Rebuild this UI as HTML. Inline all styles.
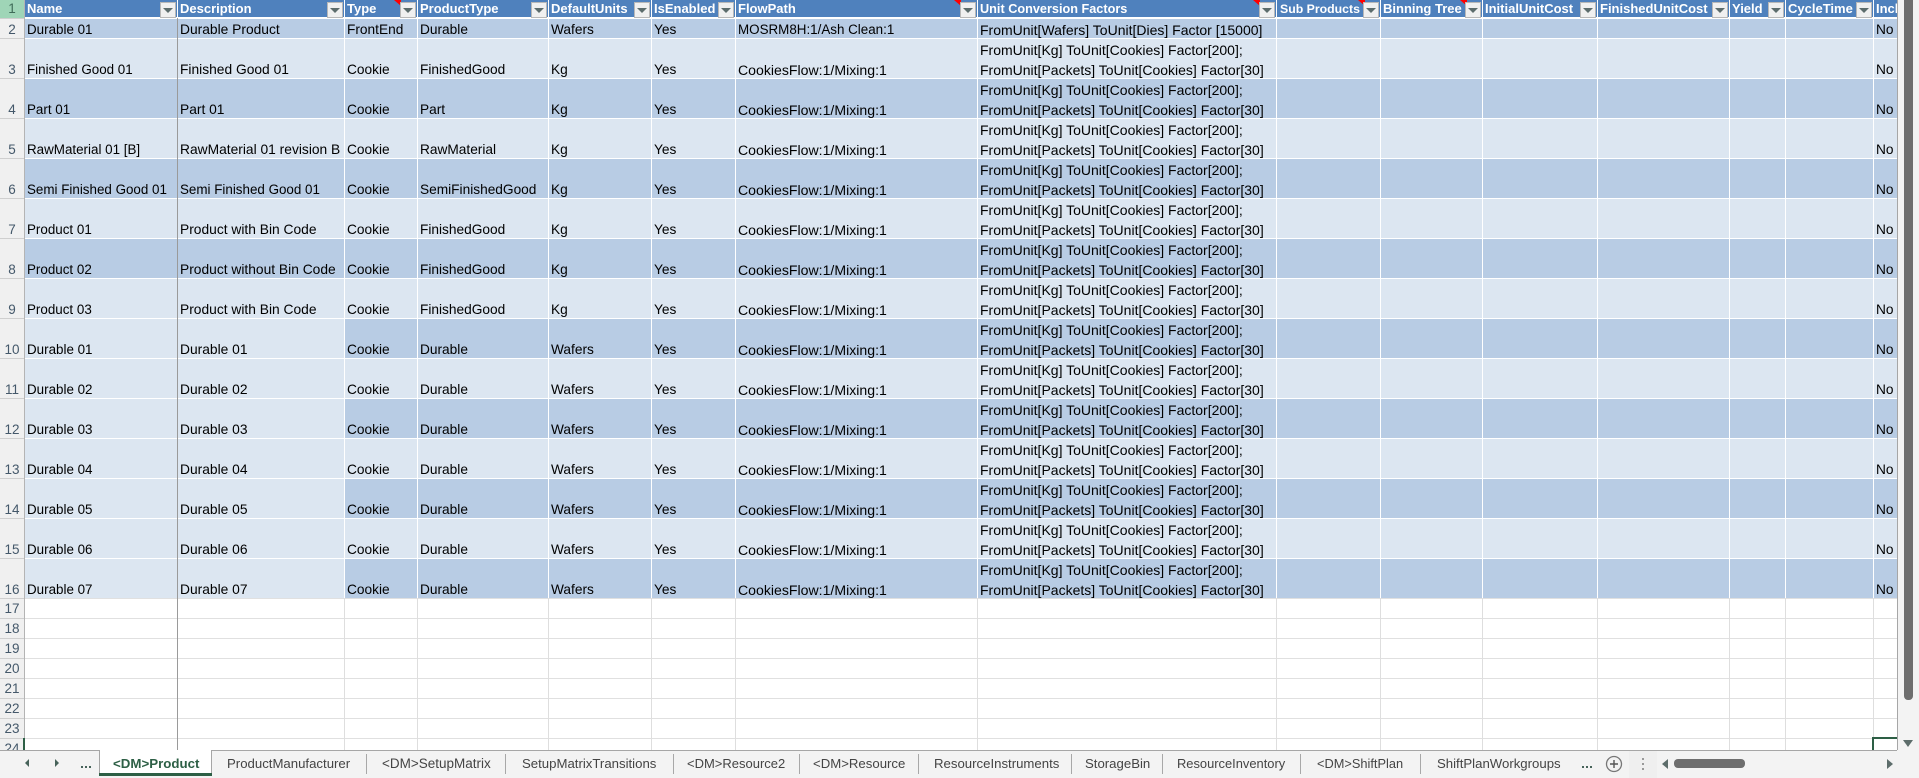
<!DOCTYPE html>
<html><head><meta charset="utf-8"><title>Sheet</title>
<style>
html,body{margin:0;padding:0;background:#fff}
#p{position:relative;width:1919px;height:778px;overflow:hidden;font-family:"Liberation Sans",sans-serif;background:#fff}
#s{position:absolute;left:0;top:0;width:1897px;height:750px;overflow:hidden}
#s div,#t div,#p>div.a{position:absolute}
.d{left:25px;width:1872px;background:#b8cce4}
.l{left:25px;width:1872px;background:#dce6f1}
.m{left:25px;width:319px;background:#dce6f1}
.g{left:0;width:1897px;height:1px;background:#e0e0e0}
.v{top:0;width:1px;height:750px;background:linear-gradient(#fff 598px,#dedede 598px)}
.h{left:0;width:24px;text-align:center;font-size:13.5px;line-height:20px;color:#44586a;height:20px}
.n{left:0;width:24px;height:1px;background:#cfcfcf}
.r{left:0;height:20px;width:1897px}
.r i{position:absolute;top:1px;font-style:normal;font-size:13.7px;line-height:20px;color:#000;white-space:nowrap}
.r i.u{top:-19px}
.r i.c1{font-size:13.4px}.r i.c2{font-size:13.8px}.r i.c7{font-size:14.1px}.r i.c8{font-size:14px}
.r.q i{font-weight:bold;color:#fff;font-size:13px;top:0}
.c1{left:27px}.c2{left:180px}.c3{left:347px}.c4{left:420px}.c5{left:551px}.c6{left:654px}.c7{left:738px}.c8{left:980px}.c9{left:1876px}
.f{top:2px;width:14px;height:14px;background:#f0f0f0;border:1px solid #b8b8b8;box-sizing:content-box}
.f::after{content:"";position:absolute;left:2px;top:5px;border-left:5px solid transparent;border-right:5px solid transparent;border-top:5px solid #5c6c6c}
.tr{top:0;width:7px;height:6px;background:#f00;clip-path:polygon(0 0,100% 0,100% 100%)}
#t{position:absolute;left:0;top:750px;width:1919px;height:28px;background:#f3f3f3}
.x{top:1px;height:24px;line-height:26px;font-size:13.2px;color:#444;white-space:nowrap}
.w{top:4px;width:1px;height:20px;background:#a8a8a8}
</style></head><body>
<div id="p">
<div id="s">
<div style="left:25px;top:0;width:1872px;height:17px;background:#4f81bd"></div>
<div style="left:25px;top:17px;width:1872px;height:1px;background:#fff"></div>
<div class="d" style="top:19px;height:19px"></div>
<div class="l" style="top:39px;height:39px"></div>
<div class="d" style="top:79px;height:39px"></div>
<div class="l" style="top:119px;height:39px"></div>
<div class="d" style="top:159px;height:39px"></div>
<div class="l" style="top:199px;height:39px"></div>
<div class="d" style="top:239px;height:39px"></div>
<div class="l" style="top:279px;height:39px"></div>
<div class="d" style="top:319px;height:39px"></div><div class="m" style="top:319px;height:39px"></div>
<div class="l" style="top:359px;height:39px"></div>
<div class="d" style="top:399px;height:39px"></div><div class="m" style="top:399px;height:39px"></div>
<div class="l" style="top:439px;height:39px"></div>
<div class="d" style="top:479px;height:39px"></div><div class="m" style="top:479px;height:39px"></div>
<div class="l" style="top:519px;height:39px"></div>
<div class="d" style="top:559px;height:39px"></div><div class="m" style="top:559px;height:39px"></div>
<div class="g" style="top:598px"></div><div class="g" style="top:618px"></div><div class="g" style="top:638px"></div><div class="g" style="top:658px"></div><div class="g" style="top:678px"></div><div class="g" style="top:698px"></div><div class="g" style="top:718px"></div><div class="g" style="top:738px"></div>
<div class="v" style="left:344px"></div><div class="v" style="left:417px"></div><div class="v" style="left:548px"></div><div class="v" style="left:651px"></div><div class="v" style="left:735px"></div><div class="v" style="left:977px"></div><div class="v" style="left:1276px"></div><div class="v" style="left:1380px"></div><div class="v" style="left:1482px"></div><div class="v" style="left:1597px"></div><div class="v" style="left:1729px"></div><div class="v" style="left:1785px"></div><div class="v" style="left:1873px"></div>
<div style="left:177px;top:0;width:1px;height:17px;background:#fff"></div>
<div style="left:177px;top:18px;width:1px;height:732px;background:#9a9a9a"></div>

<div style="left:0;top:0;width:24px;height:750px;background:#f0f0f0"></div>
<div style="left:24px;top:0;width:1px;height:750px;background:#b4b4b4"></div>
<div style="left:0;top:0;width:24px;height:18px;background:#9fd5b7"></div>
<div class="n" style="top:18px"></div><div class="n" style="top:38px"></div><div class="n" style="top:78px"></div><div class="n" style="top:118px"></div><div class="n" style="top:158px"></div><div class="n" style="top:198px"></div><div class="n" style="top:238px"></div><div class="n" style="top:278px"></div><div class="n" style="top:318px"></div><div class="n" style="top:358px"></div><div class="n" style="top:398px"></div><div class="n" style="top:438px"></div><div class="n" style="top:478px"></div><div class="n" style="top:518px"></div><div class="n" style="top:558px"></div><div class="n" style="top:598px"></div><div class="n" style="top:618px"></div><div class="n" style="top:638px"></div><div class="n" style="top:658px"></div><div class="n" style="top:678px"></div><div class="n" style="top:698px"></div><div class="n" style="top:718px"></div><div class="n" style="top:738px"></div>
<div class="h" style="top:-1px;color:#3f6b58">1</div><div class="h" style="top:20px">2</div><div class="h" style="top:60px">3</div><div class="h" style="top:100px">4</div><div class="h" style="top:140px">5</div><div class="h" style="top:180px">6</div><div class="h" style="top:220px">7</div><div class="h" style="top:260px">8</div><div class="h" style="top:300px">9</div><div class="h" style="top:340px">10</div><div class="h" style="top:380px">11</div><div class="h" style="top:420px">12</div><div class="h" style="top:460px">13</div><div class="h" style="top:500px">14</div><div class="h" style="top:540px">15</div><div class="h" style="top:580px">16</div><div class="h" style="top:599px">17</div><div class="h" style="top:619px">18</div><div class="h" style="top:639px">19</div><div class="h" style="top:659px">20</div><div class="h" style="top:679px">21</div><div class="h" style="top:699px">22</div><div class="h" style="top:719px">23</div><div class="h" style="top:739px">24</div>
<div style="left:23px;top:738px;width:2px;height:12px;background:#2d5f45"></div>
<div style="left:1872px;top:737px;width:25px;height:2px;background:#2d5f45"></div>
<div style="left:1872px;top:737px;width:2px;height:13px;background:#2d5f45"></div>

<div class="r q" style="top:-1px"><i class="c1">Name</i><i class="c2">Description</i><i class="c3">Type</i><i class="c4">ProductType</i><i class="c5">DefaultUnits</i><i class="c6">IsEnabled</i><i class="c7">FlowPath</i><i class="c8" style="font-size:12.7px">Unit Conversion Factors</i><i style="left:1280px;font-size:12.3px">Sub Products</i><i style="left:1383px">Binning Tree</i><i style="left:1485px">InitialUnitCost</i><i style="left:1600px">FinishedUnitCost</i><i style="left:1732px">Yield</i><i style="left:1788px">CycleTime</i><i class="c9">Inclu</i></div>

<div class="tr" style="left:394px"></div><div class="tr" style="left:954px"></div><div class="tr" style="left:1253px"></div><div class="tr" style="left:1358px"></div><div class="tr" style="left:1460px"></div>
<div class="f" style="left:160px"></div><div class="f" style="left:327px"></div><div class="f" style="left:400px"></div><div class="f" style="left:531px"></div><div class="f" style="left:634px"></div><div class="f" style="left:718px"></div><div class="f" style="left:960px"></div><div class="f" style="left:1259px"></div><div class="f" style="left:1363px"></div><div class="f" style="left:1465px"></div><div class="f" style="left:1580px"></div><div class="f" style="left:1712px"></div><div class="f" style="left:1768px"></div><div class="f" style="left:1856px"></div>

<div class="r" style="top:19px"><i class="c1">Durable 01</i><i class="c2">Durable Product</i><i class="c3">FrontEnd</i><i class="c4">Durable</i><i class="c5">Wafers</i><i class="c6">Yes</i><i class="c7" style="font-size:13.4px">MOSRM8H:1/Ash Clean:1</i><i class="c8">FromUnit[Wafers] ToUnit[Dies] Factor [15000]</i><i class="c9">No</i></div>
<div class="r" style="top:59px"><i class="c1">Finished Good 01</i><i class="c2">Finished Good 01</i><i class="c3">Cookie</i><i class="c4">FinishedGood</i><i class="c5">Kg</i><i class="c6">Yes</i><i class="c7">CookiesFlow:1/Mixing:1</i><i class="c8 u">FromUnit[Kg] ToUnit[Cookies] Factor[200];</i><i class="c8">FromUnit[Packets] ToUnit[Cookies] Factor[30]</i><i class="c9">No</i></div>
<div class="r" style="top:99px"><i class="c1">Part 01</i><i class="c2">Part 01</i><i class="c3">Cookie</i><i class="c4">Part</i><i class="c5">Kg</i><i class="c6">Yes</i><i class="c7">CookiesFlow:1/Mixing:1</i><i class="c8 u">FromUnit[Kg] ToUnit[Cookies] Factor[200];</i><i class="c8">FromUnit[Packets] ToUnit[Cookies] Factor[30]</i><i class="c9">No</i></div>
<div class="r" style="top:139px"><i class="c1">RawMaterial 01 [B]</i><i class="c2">RawMaterial 01 revision B</i><i class="c3">Cookie</i><i class="c4">RawMaterial</i><i class="c5">Kg</i><i class="c6">Yes</i><i class="c7">CookiesFlow:1/Mixing:1</i><i class="c8 u">FromUnit[Kg] ToUnit[Cookies] Factor[200];</i><i class="c8">FromUnit[Packets] ToUnit[Cookies] Factor[30]</i><i class="c9">No</i></div>
<div class="r" style="top:179px"><i class="c1">Semi Finished Good 01</i><i class="c2" style="font-size:13.4px">Semi Finished Good 01</i><i class="c3">Cookie</i><i class="c4">SemiFinishedGood</i><i class="c5">Kg</i><i class="c6">Yes</i><i class="c7">CookiesFlow:1/Mixing:1</i><i class="c8 u">FromUnit[Kg] ToUnit[Cookies] Factor[200];</i><i class="c8">FromUnit[Packets] ToUnit[Cookies] Factor[30]</i><i class="c9">No</i></div>
<div class="r" style="top:219px"><i class="c1">Product 01</i><i class="c2">Product with Bin Code</i><i class="c3">Cookie</i><i class="c4">FinishedGood</i><i class="c5">Kg</i><i class="c6">Yes</i><i class="c7">CookiesFlow:1/Mixing:1</i><i class="c8 u">FromUnit[Kg] ToUnit[Cookies] Factor[200];</i><i class="c8">FromUnit[Packets] ToUnit[Cookies] Factor[30]</i><i class="c9">No</i></div>
<div class="r" style="top:259px"><i class="c1">Product 02</i><i class="c2">Product without Bin Code</i><i class="c3">Cookie</i><i class="c4">FinishedGood</i><i class="c5">Kg</i><i class="c6">Yes</i><i class="c7">CookiesFlow:1/Mixing:1</i><i class="c8 u">FromUnit[Kg] ToUnit[Cookies] Factor[200];</i><i class="c8">FromUnit[Packets] ToUnit[Cookies] Factor[30]</i><i class="c9">No</i></div>
<div class="r" style="top:299px"><i class="c1">Product 03</i><i class="c2">Product with Bin Code</i><i class="c3">Cookie</i><i class="c4">FinishedGood</i><i class="c5">Kg</i><i class="c6">Yes</i><i class="c7">CookiesFlow:1/Mixing:1</i><i class="c8 u">FromUnit[Kg] ToUnit[Cookies] Factor[200];</i><i class="c8">FromUnit[Packets] ToUnit[Cookies] Factor[30]</i><i class="c9">No</i></div>
<div class="r" style="top:339px"><i class="c1">Durable 01</i><i class="c2">Durable 01</i><i class="c3">Cookie</i><i class="c4">Durable</i><i class="c5">Wafers</i><i class="c6">Yes</i><i class="c7">CookiesFlow:1/Mixing:1</i><i class="c8 u">FromUnit[Kg] ToUnit[Cookies] Factor[200];</i><i class="c8">FromUnit[Packets] ToUnit[Cookies] Factor[30]</i><i class="c9">No</i></div>
<div class="r" style="top:379px"><i class="c1">Durable 02</i><i class="c2">Durable 02</i><i class="c3">Cookie</i><i class="c4">Durable</i><i class="c5">Wafers</i><i class="c6">Yes</i><i class="c7">CookiesFlow:1/Mixing:1</i><i class="c8 u">FromUnit[Kg] ToUnit[Cookies] Factor[200];</i><i class="c8">FromUnit[Packets] ToUnit[Cookies] Factor[30]</i><i class="c9">No</i></div>
<div class="r" style="top:419px"><i class="c1">Durable 03</i><i class="c2">Durable 03</i><i class="c3">Cookie</i><i class="c4">Durable</i><i class="c5">Wafers</i><i class="c6">Yes</i><i class="c7">CookiesFlow:1/Mixing:1</i><i class="c8 u">FromUnit[Kg] ToUnit[Cookies] Factor[200];</i><i class="c8">FromUnit[Packets] ToUnit[Cookies] Factor[30]</i><i class="c9">No</i></div>
<div class="r" style="top:459px"><i class="c1">Durable 04</i><i class="c2">Durable 04</i><i class="c3">Cookie</i><i class="c4">Durable</i><i class="c5">Wafers</i><i class="c6">Yes</i><i class="c7">CookiesFlow:1/Mixing:1</i><i class="c8 u">FromUnit[Kg] ToUnit[Cookies] Factor[200];</i><i class="c8">FromUnit[Packets] ToUnit[Cookies] Factor[30]</i><i class="c9">No</i></div>
<div class="r" style="top:499px"><i class="c1">Durable 05</i><i class="c2">Durable 05</i><i class="c3">Cookie</i><i class="c4">Durable</i><i class="c5">Wafers</i><i class="c6">Yes</i><i class="c7">CookiesFlow:1/Mixing:1</i><i class="c8 u">FromUnit[Kg] ToUnit[Cookies] Factor[200];</i><i class="c8">FromUnit[Packets] ToUnit[Cookies] Factor[30]</i><i class="c9">No</i></div>
<div class="r" style="top:539px"><i class="c1">Durable 06</i><i class="c2">Durable 06</i><i class="c3">Cookie</i><i class="c4">Durable</i><i class="c5">Wafers</i><i class="c6">Yes</i><i class="c7">CookiesFlow:1/Mixing:1</i><i class="c8 u">FromUnit[Kg] ToUnit[Cookies] Factor[200];</i><i class="c8">FromUnit[Packets] ToUnit[Cookies] Factor[30]</i><i class="c9">No</i></div>
<div class="r" style="top:579px"><i class="c1">Durable 07</i><i class="c2">Durable 07</i><i class="c3">Cookie</i><i class="c4">Durable</i><i class="c5">Wafers</i><i class="c6">Yes</i><i class="c7">CookiesFlow:1/Mixing:1</i><i class="c8 u">FromUnit[Kg] ToUnit[Cookies] Factor[200];</i><i class="c8">FromUnit[Packets] ToUnit[Cookies] Factor[30]</i><i class="c9">No</i></div>
</div>

<div class="a" style="left:1897px;top:0;width:22px;height:750px;background:#f3f3f3;border-left:1px solid #a6a6a6;box-sizing:border-box"></div>
<div class="a" style="left:1904px;top:0;width:9px;height:700px;background:#6e6e6e;border-radius:0 0 4px 4px"></div>
<div class="a" style="left:1903px;top:740px;width:0;height:0;border-left:5px solid transparent;border-right:5px solid transparent;border-top:7px solid #5d6d6b"></div>

<div id="t">
<div style="left:0;top:0;width:1897px;height:1px;background:#a6a6a6"></div>
<div style="left:99px;top:0;width:113px;height:23px;background:#fff;box-sizing:border-box;border-left:1px solid #a6a6a6;border-right:1px solid #a6a6a6"></div>
<div style="left:99px;top:23px;width:113px;height:3px;background:#2d5f45"></div>
<div style="left:25px;top:9px;width:0;height:0;border-top:4px solid transparent;border-bottom:4px solid transparent;border-right:4px solid #47635a"></div>
<div style="left:55px;top:9px;width:0;height:0;border-top:4px solid transparent;border-bottom:4px solid transparent;border-left:4px solid #47635a"></div>
<div style="left:81px;top:16px;width:2px;height:2px;background:#47635a;box-shadow:4px 0 #47635a,8px 0 #47635a"></div>
<div class="x" style="left:113px;font-weight:bold;color:#2d5f45;font-size:13.3px">&lt;DM&gt;Product</div>
<div class="x" style="left:227px">ProductManufacturer</div><div class="w" style="left:366px"></div>
<div class="x" style="left:382px;font-size:13.5px">&lt;DM&gt;SetupMatrix</div><div class="w" style="left:505px"></div>
<div class="x" style="left:522px">SetupMatrixTransitions</div><div class="w" style="left:673px"></div>
<div class="x" style="left:687px;font-size:13px">&lt;DM&gt;Resource2</div><div class="w" style="left:799px"></div>
<div class="x" style="left:813px">&lt;DM&gt;Resource</div><div class="w" style="left:918px"></div>
<div class="x" style="left:934px">ResourceInstruments</div><div class="w" style="left:1071px"></div>
<div class="x" style="left:1085px">StorageBin</div><div class="w" style="left:1162px"></div>
<div class="x" style="left:1177px;font-size:12.9px">ResourceInventory</div><div class="w" style="left:1300px"></div>
<div class="x" style="left:1317px;font-size:12.8px">&lt;DM&gt;ShiftPlan</div><div class="w" style="left:1420px"></div>
<div class="x" style="left:1437px">ShiftPlanWorkgroups</div>
<div style="left:1582px;top:16px;width:2px;height:2px;background:#47635a;box-shadow:4px 0 #47635a,8px 0 #47635a"></div>
<svg style="position:absolute;left:1605px;top:5px" width="18" height="18" viewBox="0 0 18 18"><circle cx="9" cy="9" r="7.5" fill="none" stroke="#777" stroke-width="1.3"/><path d="M9 5v8M5 9h8" stroke="#555" stroke-width="1.4" fill="none"/></svg>
<div style="left:1629px;top:1px;width:28px;height:27px;background:#efefef"></div>
<div style="left:1642px;top:8px;width:2px;height:2px;background:#999;box-shadow:0 5px #999,0 10px #999"></div>
<div style="left:1662px;top:9px;width:0;height:0;border-top:5px solid transparent;border-bottom:5px solid transparent;border-right:6px solid #5d6d6b"></div>
<div style="left:1674px;top:9px;width:71px;height:9px;border-radius:4px;background:#6e6e6e"></div>
<div style="left:1887px;top:9px;width:0;height:0;border-top:5px solid transparent;border-bottom:5px solid transparent;border-left:6px solid #5d6d6b"></div>
</div>
</div>
</body></html>
